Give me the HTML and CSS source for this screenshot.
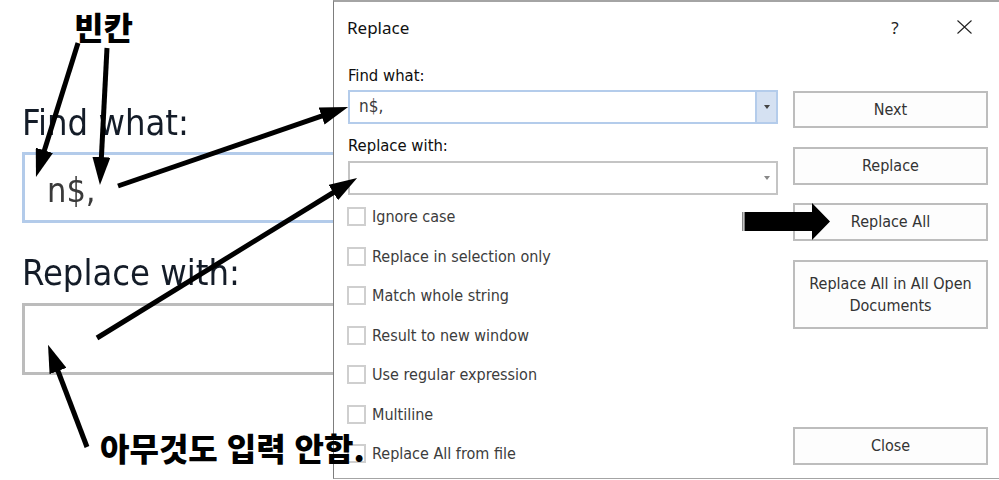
FILE: index.html
```html
<!DOCTYPE html>
<html lang="ko">
<head>
<meta charset="utf-8">
<title>Replace</title>
<link rel="stylesheet" href="styles.css">
</head>
<body>
<div class="page">
  <div class="zoom-pane">
    <div class="z-label z-label-find">Find what:</div>
    <div class="z-box z-box-find"><span class="z-value">n$,</span></div>
    <div class="z-label z-label-replace">Replace with:</div>
    <div class="z-box z-box-replace"></div>
  </div>
  <div class="dialog">
    <div class="titlebar">
      <span class="title">Replace</span>
      <span class="help">?</span>
      <svg class="close-x" viewBox="0 0 15 14" width="15" height="14"><path d="M0.5 0.5 L14.5 13.5 M14.5 0.5 L0.5 13.5" stroke="#222" stroke-width="1.1" fill="none"/></svg>
    </div>
    <div class="dlg-body">
      <div class="form">
        <div class="field-label label-find">Find what:</div>
        <div class="combo combo-active"><span class="combo-value">n$,</span><span class="combo-btn"><i class="caret"></i></span></div>
        <div class="field-label label-replace">Replace with:</div>
        <div class="combo combo-plain"><span class="combo-value"></span><span class="combo-btn"><i class="caret"></i></span></div>
        <ul class="options">
          <li class="option"><span class="check"></span>Ignore case</li>
          <li class="option"><span class="check"></span>Replace in selection only</li>
          <li class="option"><span class="check"></span>Match whole string</li>
          <li class="option"><span class="check"></span>Result to new window</li>
          <li class="option"><span class="check"></span>Use regular expression</li>
          <li class="option"><span class="check"></span>Multiline</li>
          <li class="option"><span class="check"></span>Replace All from file</li>
        </ul>
      </div>
      <div class="buttons">
        <button class="btn btn-next">Next</button>
        <button class="btn btn-replace">Replace</button>
        <button class="btn btn-replace-all">Replace All</button>
        <button class="btn btn-replace-docs">Replace All in All Open<br>Documents</button>
        <button class="btn btn-close">Close</button>
      </div>
    </div>
  </div>
</div>
<div class="note note-blank">빈칸</div>
<div class="note note-empty">아무것도 입력 안함.</div>
<svg class="arrows" width="999" height="480" viewBox="0 0 999 480">
  <defs>
    <marker id="head" viewBox="0 0 10 10" refX="2.1" refY="5" markerWidth="5.6" markerHeight="3.6" preserveAspectRatio="none" orient="auto" markerUnits="strokeWidth">
      <path d="M0 0 L10 5 L0 10 Z" fill="#000"/>
    </marker>
  </defs>
  <g stroke="#000" stroke-width="5" fill="none" marker-end="url(#head)">
    <line x1="78" y1="43" x2="42.6" y2="156"/>
    <line x1="107" y1="48" x2="101.1" y2="163"/>
    <line x1="118" y1="186" x2="327.2" y2="114.2"/>
    <line x1="97" y1="338" x2="338.3" y2="189.5"/>
    <line x1="87" y1="447" x2="55.9" y2="365.5"/>
  </g>
  <rect x="742" y="212" width="1.5" height="19" fill="#888"/>
  <path d="M744.5 212 L812 212 L812 203 L830 221.5 L812 240 L812 231 L744.5 231 Z" fill="#000"/>
</svg>
</body>
</html>
```

FILE: styles.css
```css
html, body {
  margin: 0;
  padding: 0;
  background: #fff;
}

body {
  width: 999px;
  height: 480px;
  overflow: hidden;
  position: relative;
}

.page {
  display: flex;
  width: 999px;
  height: 480px;
}

/* magnified left pane */
.zoom-pane {
  width: 333px;
  flex: none;
  overflow: hidden;
  padding-left: 22px;
  box-sizing: border-box;
  filter: blur(0.45px);
}

.z-label {
  font-family: "DejaVu Sans Condensed", "DejaVu Sans", sans-serif;
  font-stretch: condensed;
  font-size: 36px;
  line-height: 40px;
  height: 40px;
  color: #141c28;
  white-space: nowrap;
}

.z-label-find {
  margin-top: 103px;
}

.z-label-replace {
  margin-top: 30px;
}

.z-box {
  width: 340px;
  box-sizing: border-box;
  background: #fff;
}

.z-box-find {
  margin-top: 9px;
  height: 71px;
  border: 3px solid #b3cbea;
  display: flex;
  align-items: center;
  padding-left: 22px;
}

.z-value {
  font-family: "DejaVu Sans Condensed", "DejaVu Sans", sans-serif;
  font-stretch: condensed;
  font-size: 34px;
  color: #3a3a3a;
  margin-top: 4px;
}

.z-box-replace {
  margin-top: 10px;
  height: 72px;
  border: 3px solid #bcbcbc;
}

/* dialog */
.dialog {
  width: 666px;
  height: 479px;
  flex: none;
  box-sizing: border-box;
  border-left: 1px solid #7d7d7d;
  border-top: 2px solid #a4a4a4;
  border-bottom: 1px solid #a4a4a4;
  background: #fff;
  display: flex;
  flex-direction: column;
}

.titlebar {
  height: 50px;
  display: flex;
  align-items: center;
  padding-left: 13px;
}

.title {
  font-family: "Noto Sans", "Open Sans", sans-serif;
  font-size: 17px;
  color: #111;
  flex: 1;
}

.help {
  font-family: "Noto Sans", "Open Sans", sans-serif;
  font-size: 17px;
  color: #222;
  width: 20px;
  text-align: center;
  margin-right: 52px;
}

.close-x {
  display: block;
  margin-right: 27px;
}

.dlg-body {
  display: flex;
  padding-left: 14px;
  gap: 15px;
}

.form {
  width: 430px;
  flex: none;
}

.field-label {
  font-family: "DejaVu Sans Condensed", "DejaVu Sans", sans-serif;
  font-stretch: condensed;
  font-size: 16.5px;
  line-height: 20px;
  height: 20px;
  color: #0e0e0e;
}

.label-find {
  margin-top: 14px;
  margin-bottom: 4px;
}

.label-replace {
  margin-top: 12px;
  margin-bottom: 5px;
}

.combo {
  height: 34px;
  box-sizing: border-box;
  display: flex;
  background: #fff;
}

.combo-active {
  border: 2px solid #b4cceb;
}

.combo-plain {
  border: 2px solid #c4c4c4;
}

.combo-value {
  flex: 1;
  padding-left: 9px;
  font-family: "DejaVu Sans Condensed", "DejaVu Sans", sans-serif;
  font-stretch: condensed;
  font-size: 17px;
  line-height: 28px;
  color: #3a3a3a;
}

.combo-btn {
  width: 19px;
  display: flex;
  align-items: center;
  justify-content: center;
}

.combo-active .combo-btn {
  background: #d5e1f2;
  border-left: 2px solid #b4cceb;
}

.caret {
  width: 0;
  height: 0;
  border-left: 3.5px solid transparent;
  border-right: 3.5px solid transparent;
  border-top: 4px solid #444;
}

.combo-plain .caret {
  border-top-color: #888;
}

.options {
  list-style: none;
  margin: 2px 0 0;
  padding: 0;
}

.option {
  height: 39.5px;
  display: flex;
  align-items: center;
  font-family: "DejaVu Sans Condensed", "DejaVu Sans", sans-serif;
  font-stretch: condensed;
  font-size: 16px;
  color: #3c3c3c;
}

.check {
  width: 19px;
  height: 19px;
  box-sizing: border-box;
  border: 2px solid #cfcfcf;
  background: #fff;
  margin-left: -1px;
  margin-right: 6px;
  flex: none;
}

.buttons {
  width: 195px;
  flex: none;
  display: flex;
  flex-direction: column;
}

.btn {
  width: 195px;
  box-sizing: border-box;
  border: 2px solid #bdbdbd;
  background: #fdfdfd;
  font-family: "DejaVu Sans Condensed", "DejaVu Sans", sans-serif;
  font-stretch: condensed;
  font-size: 16px;
  line-height: 22px;
  color: #333;
  padding: 0;
  margin: 0;
}

.btn-next {
  margin-top: 39px;
  height: 37px;
}

.btn-replace {
  margin-top: 19px;
  height: 38px;
}

.btn-replace-all {
  margin-top: 18px;
  height: 38px;
}

.btn-replace-docs {
  margin-top: 19px;
  height: 69px;
}

.btn-close {
  margin-top: 98px;
  height: 38px;
}

/* annotations */
.note {
  position: absolute;
  font-family: "Noto Sans CJK KR", "Noto Sans", sans-serif;
  font-weight: 900;
  font-size: 32px;
  line-height: 32px;
  color: #000;
  white-space: nowrap;
}

.note-blank {
  left: 74px;
  top: 10px;
}

.note-empty {
  left: 100px;
  top: 431px;
}

.arrows {
  position: absolute;
  left: 0;
  top: 0;
  pointer-events: none;
}
```
